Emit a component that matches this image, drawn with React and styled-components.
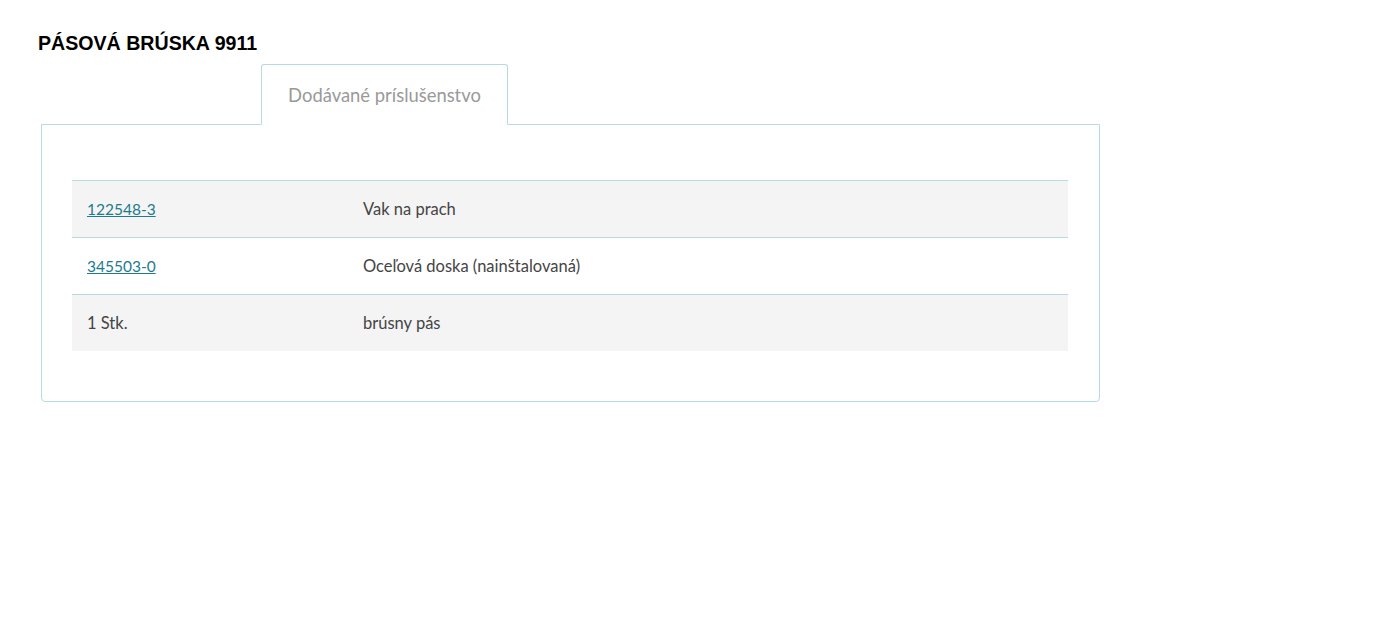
import React from "react";
import styled, { createGlobalStyle } from "styled-components";

const rows = [
  { code: "122548-3", link: true, name: "Vak na prach" },
  { code: "345503-0", link: true, name: "Oceľová doska (nainštalovaná)" },
  { code: "1 Stk.", link: false, name: "brúsny pás" },
];

const GlobalStyle = createGlobalStyle`
  body {
    margin: 0;
    background: #fff;
  }
`;

const Page = styled.div`
  padding: 32px 0 0 38px;
  width: 1062px;
`;

const Title = styled.h1`
  margin: 0 0 9px;
  font-family: "Liberation Sans", Arial, sans-serif;
  font-size: 19.6px;
  line-height: 23px;
  font-weight: 700;
  color: #000;
`;

const TabBar = styled.div`
  display: flex;
  padding-left: 223px;
  margin-bottom: -1px;
  position: relative;
  z-index: 1;
`;

const Tab = styled.div`
  width: 245px;
  height: 59px;
  display: flex;
  align-items: center;
  justify-content: center;
  border: 1px solid #b8dae1;
  border-bottom: 1px solid #fff;
  border-radius: 3px 3px 0 0;
  background: #fff;
  font-family: Lato, "Noto Sans", sans-serif;
  font-size: 18.4px;
  color: #999;
`;

const Panel = styled.div`
  margin-left: 3px;
  border: 1px solid #b8dae1;
  border-radius: 0 0 4px 4px;
  padding: 55px 31px 50px 30px;
`;

const Table = styled.div`
  display: flex;
  flex-direction: column;
`;

const Row = styled.div`
  display: grid;
  grid-template-columns: 276px 1fr;
  align-items: center;
  height: 56px;
  padding-left: 15px;
  border-top: 1px solid #b8dae1;
  background: ${(p) => (p.$shaded ? "#f4f4f4" : "#fff")};
  font-family: Lato, "Noto Sans", sans-serif;
  font-size: 16.5px;
  color: #444;
`;

const Code = styled.a`
  color: #1d7b8c;
  text-decoration: underline;
  justify-self: start;
  font-size: 15.5px;
`;

export default function App() {
  return (
    <>
      <GlobalStyle />
      <Page>
        <Title>PÁSOVÁ BRÚSKA 9911</Title>
        <TabBar>
          <Tab>Dodávané príslušenstvo</Tab>
        </TabBar>
        <Panel>
          <Table>
            {rows.map((r, i) => (
              <Row key={r.code} $shaded={i % 2 === 0}>
                {r.link ? <Code href="#">{r.code}</Code> : <span>{r.code}</span>}
                <span>{r.name}</span>
              </Row>
            ))}
          </Table>
        </Panel>
      </Page>
    </>
  );
}
